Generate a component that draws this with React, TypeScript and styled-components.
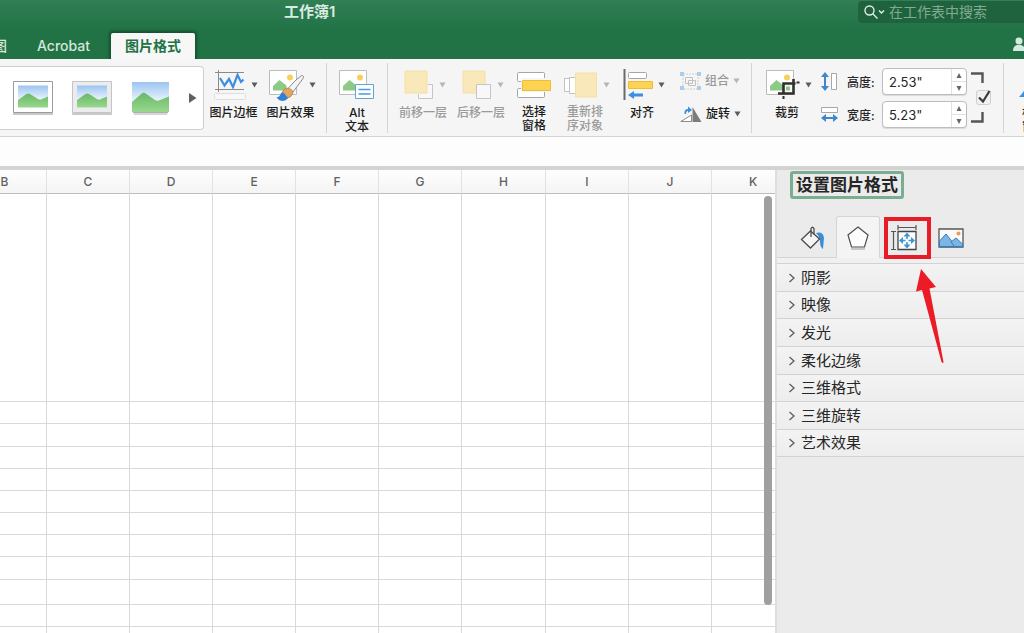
import React, { useEffect, useState } from "react";
import styled, { createGlobalStyle, css } from "styled-components";

const GlobalStyle = createGlobalStyle`
  * { box-sizing: border-box; }
  body {
    margin: 0;
    overflow: hidden;
    font-family: Inter, "Noto Sans CJK SC", sans-serif;
    color: #262626;
    background: #fff;
  }
  button, input { font-family: inherit; color: inherit; }
  button { border: 0; padding: 0; background: none; }
  svg { display: block; flex: none; }
`;

/* ---------- window ---------- */

const Window = styled.div`
  display: flex;
  flex-direction: column;
  height: 100vh;
  overflow: hidden;
`;

const Header = styled.header`
  background: linear-gradient(#317f55, #217346 50%, #217346);
`;

const TitleBar = styled.div`
  display: flex;
  align-items: center;
  height: 24px;
  padding-left: 284px;
`;

const DocTitle = styled.h1`
  margin: 0;
  font-size: 15px;
  line-height: 24px;
  font-weight: 600;
  color: #dcebe2;
`;

const Search = styled.label`
  display: flex;
  align-items: center;
  gap: 2px;
  width: 166px;
  height: 22px;
  margin-left: auto;
  padding-left: 6px;
  border-radius: 4px 0 0 4px;
  background: #1f633e;
  overflow: hidden;
`;

const SearchInput = styled.input`
  width: 130px;
  padding: 0;
  margin-left: 2px;
  border: 0;
  outline: 0;
  background: none;
  font-size: 14px;
  line-height: 20px;
  color: #fff;
  &::placeholder { color: #82ab93; opacity: 1; }
`;

const TabBar = styled.nav`
  display: flex;
  align-items: flex-end;
  height: 35px;
  overflow: hidden;
`;

const Tab = styled.button<{ $active?: boolean; $first?: boolean }>`
  height: 26px;
  padding: 0 12px;
  margin-right: 9px;
  font-size: 14px;
  line-height: 24px;
  font-weight: 500;
  color: #d5e6dc;
  ${(p) => p.$first && css`margin-left: -33px; margin-right: 6px;`}
  ${(p) => p.$active && css`
    font-weight: 700;
    color: #217346;
    background: #f7f7f7;
    border-radius: 2px 2px 0 0;
    box-shadow: 0 0 3px 2px #174f30;
    padding: 0 14px;
  `}
`;

const Share = styled.button`
  height: 28px;
  margin-left: auto;
  margin-right: -13px;
`;

/* ---------- ribbon ---------- */

const Ribbon = styled.div`
  display: flex;
  align-items: flex-start;
  height: 78px;
  background: #f5f5f5;
  border-bottom: 1px solid #d2d2d2;
  overflow: hidden;
  white-space: nowrap;
`;

const Gallery = styled.div`
  display: flex;
  flex: none;
  align-items: center;
  gap: 17px;
  width: 204px;
  height: 64px;
  margin-top: 7px;
  padding-left: 12px;
  border: 1px solid #cfcfcf;
  border-left: 0;
  border-radius: 0 4px 4px 0;
  background: #fff;
`;

const Group = styled.div<{ $gap?: number; $start?: number; $end?: number }>`
  display: flex;
  flex: none;
  gap: ${(p) => p.$gap ?? 8}px;
  height: 70px;
  margin-top: 4px;
  padding: 0 ${(p) => p.$end ?? 12}px 0 ${(p) => p.$start ?? 12}px;
  border-right: 1px solid #d4d4d4;
`;

const ToolButton = styled.button<{ $width: number; $disabled?: boolean }>`
  display: flex;
  flex: none;
  flex-direction: column;
  align-items: center;
  gap: 4px;
  width: ${(p) => p.$width}px;
  padding-top: 5px;
  font-size: 12px;
  line-height: 14px;
  font-weight: 500;
  color: ${(p) => (p.$disabled ? "#9a9a9a" : "#1c1c1c")};
`;

const IconRow = styled.span<{ $menu?: boolean }>`
  display: flex;
  align-items: center;
  gap: 5px;
  height: 34px;
  margin-left: ${(p) => (p.$menu ? 4 : 0)}px;
`;

const Stack = styled.div`
  display: flex;
  flex-direction: column;
  gap: 13px;
  padding: 8px 0 0 4px;
`;

const RowButton = styled.button<{ $disabled?: boolean }>`
  display: flex;
  align-items: center;
  gap: 4px;
  height: 20px;
  font-size: 12px;
  line-height: 20px;
  font-weight: 500;
  color: ${(p) => (p.$disabled ? "#9a9a9a" : "#1c1c1c")};
`;

const SizeFields = styled.div`
  display: flex;
  flex-direction: column;
  gap: 6px;
  margin-left: 7px;
  padding-top: 5px;
`;

const SizeRow = styled.label`
  display: flex;
  align-items: center;
  height: 27px;
  font-size: 12px;
  font-weight: 500;
`;

const SizeName = styled.span`
  width: 35px;
  margin-left: 9px;
`;

const Stepper = styled.span`
  display: flex;
  width: 85px;
  height: 27px;
  border: 1px solid #bdbdbd;
  border-radius: 4px;
  background: #fff;
  box-shadow: 0 1px 1px #d9d9d9;
`;

const StepInput = styled.input`
  flex: 1;
  min-width: 0;
  padding: 0 0 0 6px;
  border: 0;
  outline: 0;
  background: none;
  font-size: 13px;
`;

const StepButtons = styled.span`
  display: flex;
  flex-direction: column;
  width: 15px;
  border-left: 1px solid #e2e2e2;
`;

const StepButton = styled.button`
  display: flex;
  flex: 1;
  align-items: center;
  justify-content: center;
  & + & { border-top: 1px solid #e2e2e2; }
`;

const Lock = styled.label`
  display: flex;
  flex-direction: column;
  gap: 7px;
  width: 20px;
  padding-top: 9px;
`;

const LockBox = styled.span`
  position: relative;
  height: 15px;
  margin-left: 5px;
`;

const CheckBox = styled.input`
  display: block;
  appearance: none;
  width: 15px;
  height: 15px;
  margin: 0;
  border: 1px solid #cfcfcf;
  border-radius: 3px;
  background: #f1f1f1;
`;

const CheckMark = styled.svg`
  position: absolute;
  left: 0;
  top: 0;
  pointer-events: none;
`;

/* ---------- work area ---------- */

const FormulaBar = styled.div`
  flex: none;
  height: 33px;
  background: #fdfdfd;
  border-bottom: 4px solid #d3d3d3;
`;

const Work = styled.main`
  display: flex;
  flex: 1;
  min-height: 0;
`;

const Sheet = styled.section`
  position: relative;
  flex: 1;
  min-width: 0;
  overflow: hidden;
  background: #fff;
`;

const Grid = styled.table`
  table-layout: fixed;
  border-collapse: separate;
  border-spacing: 0;
  width: 0;
  margin-left: -37px;
`;

const ColumnHead = styled.th`
  height: 24px;
  padding: 0;
  border-bottom: 1px solid #bdbdbd;
  border-right: 1px solid #e2e2e2;
  background: linear-gradient(#fefefe, #f4f4f4);
  font-size: 12px;
  line-height: 23px;
  font-weight: 500;
  color: #606060;
`;

const Cell = styled.td<{ $height: number }>`
  height: ${(p) => p.$height}px;
  padding: 0;
  border-right: 1px solid #d9d9d9;
  border-bottom: 1px solid #d9d9d9;
`;

const ScrollThumb = styled.div`
  position: absolute;
  right: 3px;
  top: 26px;
  bottom: 28px;
  width: 8px;
  border-radius: 4px;
  background: #9f9f9f;
`;

/* ---------- format pane ---------- */

const Pane = styled.aside`
  position: relative;
  flex: none;
  width: 249px;
  border-left: 2px solid #dedede;
  background: #ebebeb;
`;

const PaneTitle = styled.h2`
  width: fit-content;
  margin: 1px 0 0 13px;
  padding: 0 3px;
  border: 3px solid #7bae91;
  border-radius: 3px;
  font-size: 17px;
  line-height: 22px;
  font-weight: 700;
  color: #262626;
`;

const PaneTabs = styled.div`
  display: flex;
  height: 42px;
  margin-top: 17px;
  padding-left: 12px;
  background: linear-gradient(#d4d4d4, #d4d4d4) bottom / 100% 1px no-repeat;
`;

const PaneTab = styled.button<{ $active?: boolean }>`
  position: relative;
  display: flex;
  align-items: center;
  justify-content: center;
  width: ${(p) => (p.$active ? 44 : 47)}px;
  border: 1px solid ${(p) => (p.$active ? "#d4d4d4" : "transparent")};
  border-bottom: 0;
  border-radius: 3px 3px 0 0;
  background: ${(p) => (p.$active ? "#f4f4f4" : "none")};
`;

const Highlight = styled.span`
  position: absolute;
  left: 3px;
  top: 0;
  width: 47px;
  height: 42px;
  border: 4px solid #e81c27;
`;

const Arrow = styled.svg`
  position: absolute;
  left: 138px;
  top: 99px;
`;

const Sections = styled.div`
  padding-top: 5px;
  background: #f0f0f0;
`;

const SectionButton = styled.button`
  display: flex;
  align-items: center;
  gap: 5px;
  width: 100%;
  height: 28px;
  padding-left: 11px;
  border-top: 1px solid #d2d2d2;
  background: linear-gradient(#f3f3f3, #ededed);
  font-size: 15px;
  line-height: 26px;
  &:nth-child(3n + 2) { height: 27px; }
  &:last-child { border-bottom: 1px solid #d2d2d2; }
`;

/* ---------- drawings ---------- */

const Caret = ({ faint }: { faint?: boolean }) => (
  <svg width="7" height="6" viewBox="0 0 7 6"><path d="M.5 .5h6L3.5 5.5z" fill={faint ? "#b5b5b5" : "#5c5c5c"} /></svg>
);

const StepArrow = ({ down }: { down?: boolean }) => (
  <svg width="6" height="5" viewBox="0 0 6 5"><path d={down ? "M.5 0h5L3 5z" : "M.5 5h5L3 0z"} fill="#666" /></svg>
);

const Thumb = ({ frame }: { frame: "white" | "grey" | "none" }) => {
  const full = frame === "none";
  return (
    <svg width="42" height="38" viewBox="0 0 42 38">
      <defs>
        <linearGradient id={`sky-${frame}`} x2="0" y2="1"><stop stopColor="#9cc4f1" /><stop offset=".6" stopColor="#e6f1fb" /><stop offset="1" stopColor="#f2f8fd" /></linearGradient>
        <linearGradient id={`hill-${frame}`} x2="0" y2="1"><stop stopColor="#6ab866" /><stop offset="1" stopColor="#98d88e" /></linearGradient>
      </defs>
      {full ? (
        <>
          <path d="M3 33h35l-1 3H4z" fill="#c4c4c4" opacity=".7" />
          <path d="M3 33h35v1H3z" fill="#8c9a8c" opacity=".6" />
          <path d="M2 3h37v30H2z" fill={`url(#sky-${frame})`} />
          <path d="M2 23L11.500 14.700Q13.500 13 16 14.700L25 21Q27.500 22.500 30 21L39 17.500V33H2z" fill={`url(#hill-${frame})`} />
        </>
      ) : (
        <>
          <path d="M1 34h40v2H1z" fill="#c9c9c9" />
          <path d="M1.500 2.500h39v31h-39z" fill={frame === "white" ? "#fff" : "#ececee"} stroke={frame === "white" ? "#9b9b9b" : "#c4c4c6"} />
          <path d="M6 6.500h30v22H6z" fill={`url(#sky-${frame})`} />
          <path d="M6 21L14.500 15Q16 14 18 15L26 20Q28 21 30 20L36 17.500V28.500H6z" fill={`url(#hill-${frame})`} />
        </>
      )}
    </svg>
  );
};

const BorderIcon = () => (
  <svg width="32" height="32" viewBox="0 0 32 32" fill="none">
    <path d="M1 3.500h29M1 20.500h29M4.500 1v22" stroke="#8a8a8a" />
    <path d="M6 9l4.500 7.500 4.500-6.500 4 8 4.500-12 3.500 7 2.500-2.500" stroke="#3c8ee0" strokeWidth="2.200" />
    <rect x=".5" y="24.500" width="31" height="6" rx="1" fill="#f8f8f8" stroke="#dedede" />
  </svg>
);

const Photo = () => (
  <g>
    <path d="M.5 2.500h27v24H.5z" fill="#fff" stroke="#bcbcbc" />
    <circle cx="21" cy="9.500" r="3" fill="#f8cf58" />
    <path d="M4 22.500v-4.500l6.500-6 7 5.500v5z" fill="#8cca86" />
  </g>
);

const EffectsIcon = () => (
  <svg width="35" height="34" viewBox="0 0 35 34">
    <Photo />
    <path d="M32.500 7.500Q35.500 7.500 34 10.500L24 24Q21 24 19 20.500Q26 12 32.500 7.500z" fill="#f4f4f4" stroke="#8a8a8a" />
    <path d="M18 20q6 1 6 5-2 5-6 5l-5-5q1-4 5-5z" fill="#e3a65c" stroke="#a76d2a" strokeWidth=".6" />
    <path d="M7.500 29.500q3.500-.5 4.500-4.500 1-1 3 0l4 5q-2 3-6 3-4-1-5.500-3.500z" fill="#3181d8" />
  </svg>
);

const AltIcon = () => (
  <svg width="36" height="34" viewBox="0 0 36 34">
    <Photo />
    <path d="M16.500 16.500h18v14h-18z" fill="#fff" stroke="#5aa6d8" />
    <path d="M19.500 21.500h12M19.500 26h12" stroke="#4b9bdd" strokeWidth="1.400" />
  </svg>
);

const ForwardIcon = () => (
  <svg width="30" height="32" viewBox="0 0 30 32">
    <path d="M14.500 15.500h14v14h-14z" fill="#f8f8f8" stroke="#c5c5c5" />
    <path d="M0 1h24v24H0z" fill="#f5f5f5" />
    <path d="M1 2h22v22H1z" fill="#f9e8ba" stroke="#f6dfa4" />
  </svg>
);

const BackwardIcon = () => (
  <svg width="30" height="32" viewBox="0 0 30 32">
    <path d="M1 2h22v22H1z" fill="#f9e8ba" stroke="#f6dfa4" />
    <path d="M14.500 15.500h14v14h-14z" fill="#f8f8f8" stroke="#c5c5c5" />
  </svg>
);

const SelectionIcon = () => (
  <svg width="34" height="32" viewBox="0 0 34 32">
    <rect x=".5" y="3.500" width="27" height="9" rx="1" fill="#fff" stroke="#a6a6a6" />
    <rect x=".5" y="19.500" width="27" height="9" rx="1" fill="#fff" stroke="#a6a6a6" />
    <path d="M4 9h30v14H4z" fill="#f5f5f5" />
    <path d="M5.500 11.500h28v10h-28z" fill="#ffd352" stroke="#eebc3b" />
  </svg>
);

const ReorderIcon = () => (
  <svg width="34" height="32" viewBox="0 0 34 32">
    <path d="M.5 9.500h6v13h-6z" fill="#fff" stroke="#c2c2c2" />
    <path d="M5.500 8.500h8v16h-8z" fill="#fff" stroke="#c2c2c2" />
    <path d="M11.500 4h21v24h-21z" fill="#f9e8ba" stroke="#f6dfa4" />
  </svg>
);

const AlignIcon = () => (
  <svg width="30" height="32" viewBox="0 0 30 32">
    <path d="M1.500 0v31" stroke="#6a6a6a" strokeWidth="2" />
    <rect x="5.500" y="3.500" width="18" height="6" rx="1" fill="#fff" stroke="#a6a6a6" />
    <path d="M5.500 12.500h24v7h-24z" fill="#ffd352" stroke="#eebc3b" />
    <path d="M5 26l6-4v2.500h9v3h-9V30z" fill="#3c8ee0" />
  </svg>
);

const GroupIcon = () => (
  <svg width="21" height="19" viewBox="0 0 21 19" fill="none">
    <path d="M3 2h15v15H3z" stroke="#cfcfcf" strokeDasharray="2 1" />
    <path d="M5.500 5.500h7v6h-7zM8.500 8.500h7v5h-7z" stroke="#c0c0c0" />
    <path d="M0 0h4v4H0zM17 0h4v4h-4zM0 14h4v4H0zM17 14h4v4h-4z" fill="#a9cdee" />
  </svg>
);

const RotateIcon = () => (
  <svg width="22" height="18" viewBox="0 0 22 18">
    <path d="M.8 16.500L11.500 10v6.500z" fill="#fff" stroke="#8b8b8b" />
    <path d="M12.500 2L21.500 17h-9z" fill="#7c7c7c" />
    <path d="M4.500 9Q4 4 8 4V1.500L12 5 8 8V6Q6 6 6 9z" fill="#3c8ee0" />
  </svg>
);

const CropIcon = () => (
  <svg width="34" height="34" viewBox="0 0 34 34" fill="none">
    <Photo />
    <path d="M17 15h10v10H17z" fill="#f7f7f7" />
    <path d="M20 18.500h4v4h-4z" fill="#8cca86" />
    <path d="M17.500 26V15.500h12M27.500 11v14.500H12" stroke="#303030" strokeWidth="2.600" />
    <path d="M17.500 28v3M30.500 14.500h3" stroke="#303030" strokeWidth="2" />
  </svg>
);

const HeightIcon = () => (
  <svg width="17" height="19" viewBox="0 0 17 19">
    <path d="M4 0l4 5H5v9h3l-4 5-4-5h3V5H0z" fill="#3d88c9" />
    <path d="M10.500 1.500h5v16h-5z" fill="#fff" stroke="#a8a8a8" />
  </svg>
);

const WidthIcon = () => (
  <svg width="17" height="17" viewBox="0 0 17 17">
    <path d="M.5 1.500h16v5H.5z" fill="#fff" stroke="#a8a8a8" />
    <path d="M0 12l5-4v3h7V8l5 4-5 4v-3H5v3z" fill="#3d88c9" />
  </svg>
);

const PaneIcon = () => (
  <svg width="30" height="34" viewBox="0 0 30 34">
    <path d="M0 29Q5 25 10 12l14 2v15z" fill="#3b8de0" />
  </svg>
);

const PersonIcon = () => (
  <svg width="24" height="16" viewBox="0 0 24 16" fill="#d7e8de">
    <circle cx="6" cy="4" r="3.500" /><path d="M0 14q0-5 4-6h4q4 1 4 6z" /><path d="M14 7h8v2h-8z" />
  </svg>
);

const FillIcon = () => (
  <svg width="26" height="26" viewBox="0 0 26 26" fill="none">
    <path d="M16 8q7-2 8 5l-1 11q-3-2-3-7 0-5-4-9z" fill="#3c8fd4" />
    <path d="M1.500 14.500l9-8.500 9 8-9 9z" fill="#f5f5f5" stroke="#4d4d4d" strokeWidth="1.300" />
    <path d="M11 12V3.500q1.500-2.500 3 0v6" stroke="#4d4d4d" strokeWidth="1.300" />
  </svg>
);

const PentagonIcon = () => (
  <svg width="24" height="26" viewBox="0 0 24 26">
    <path d="M12 2l10 8-3.500 12h-13L2 10z" fill="#fcfcfc" stroke="#4d4d4d" strokeWidth="1.200" />
    <path d="M5 24h14" stroke="#a8a8a8" strokeWidth="1.200" />
  </svg>
);

const SizeIcon = () => (
  <svg width="26" height="27" viewBox="0 0 26 27" fill="none">
    <path d="M7 3.500h18M7 1v5M25 1v5M2.500 7.500v18M0 7.500h5M0 25.500h5" stroke="#555" strokeWidth="1.200" />
    <path d="M7 7.500h18v18H7z" fill="#fdfdfd" stroke="#444" strokeWidth="1.300" />
    <path d="M16 8.500l3.500 4h-7zM16 24.500l3.500-4h-7zM8 16.500l4-3.500v7zM24 16.500l-4-3.500v7z" fill="#3c96d4" />
    <path d="M16 12v3M16 18v3M11.500 16.500h3M17.500 16.500h3" stroke="#3c96d4" strokeWidth="1.600" />
  </svg>
);

const PictureIcon = () => (
  <svg width="26" height="20" viewBox="0 0 26 20">
    <path d="M1 1h24v18H1z" fill="#fafafa" stroke="#555" strokeWidth="1.300" />
    <path d="M1.500 13L8 6l10 12.500H1.500z" fill="#7bb5e6" stroke="#2f7fc0" />
    <path d="M13 14l5-4 6.500 6v2.500h-8z" fill="#7bb5e6" stroke="#2f7fc0" />
    <circle cx="20.500" cy="5.500" r="2" fill="#f09a4c" />
  </svg>
);

/* ---------- parts ---------- */

type ToolProps = { icon: React.ReactNode; lines: string[]; width: number; menu?: boolean; disabled?: boolean };

const Tool = ({ icon, lines, width, menu, disabled }: ToolProps) => (
  <ToolButton $width={width} $disabled={disabled} disabled={disabled}>
    <IconRow $menu={menu}>
      {icon}
      {menu && <Caret faint={disabled} />}
    </IconRow>
    <span>
      {lines.map((line) => <div key={line}>{line}</div>)}
    </span>
  </ToolButton>
);

const SizeField = ({ icon, name, value }: { icon: React.ReactNode; name: string; value: string }) => (
  <SizeRow>
    {icon}
    <SizeName>{name}:</SizeName>
    <Stepper>
      <StepInput defaultValue={value} />
      <StepButtons>
        <StepButton aria-label="+"><StepArrow /></StepButton>
        <StepButton aria-label="-"><StepArrow down /></StepButton>
      </StepButtons>
    </Stepper>
  </SizeRow>
);

const columnNames = "BCDEFGHIJKLMNOPQRSTUVWXYZ".split("");
const columnWidth = (name: string) => (name === "B" || name === "H" ? 84 : 83);
const rowHeights = [208, 22, 23, 22, 22, 22, 22, 22, 23, 25, 22, 22, 22, 22, 22, 22, 22, 22];
const sections = ["阴影", "映像", "发光", "柔化边缘", "三维格式", "三维旋转", "艺术效果"];

/* Only as many columns as fit beside the 249px pane; the first one is scrolled 37px out. */
const visibleColumns = () => columnNames.slice(0, Math.ceil((window.innerWidth - 249 + 37) / 83));

function useColumns() {
  const [columns, setColumns] = useState(visibleColumns);
  useEffect(() => {
    const update = () => setColumns(visibleColumns());
    window.addEventListener("resize", update);
    return () => window.removeEventListener("resize", update);
  }, []);
  return columns;
}

export default function App() {
  const columns = useColumns();
  return (
    <Window>
      <GlobalStyle />
      <Header>
        <TitleBar>
          <DocTitle>工作簿1</DocTitle>
          <Search>
            <svg width="21" height="15" viewBox="0 0 21 15" fill="none" stroke="#e2eee7" strokeWidth="1.400">
              <circle cx="5.500" cy="5.500" r="4.500" /><path d="M9 9l4.500 4.500M15 5.500l2.500 2.500L20 5.500" />
            </svg>
            <SearchInput aria-label="在工作表中搜索" placeholder="在工作表中搜索" />
          </Search>
        </TitleBar>
        <TabBar>
          <Tab $first>视图</Tab>
          <Tab>Acrobat</Tab>
          <Tab $active>图片格式</Tab>
          <Share aria-label="共享"><PersonIcon /></Share>
        </TabBar>
      </Header>

      <Ribbon>
        <Gallery>
          <Thumb frame="white" />
          <Thumb frame="grey" />
          <Thumb frame="none" />
          <svg width="8" height="10" viewBox="0 0 8 10"><path d="M0 0l7.500 5L0 10z" fill="#5f5f5f" /></svg>
        </Gallery>
        <Group $start={5} $end={11}>
          <Tool width={49} menu icon={<BorderIcon />} lines={["图片边框"]} />
          <Tool width={49} menu icon={<EffectsIcon />} lines={["图片效果"]} />
        </Group>
        <Group>
          <Tool width={36} icon={<AltIcon />} lines={["Alt", "文本"]} />
        </Group>
        <Group $start={10} $end={10}>
          <Tool width={50} menu disabled icon={<ForwardIcon />} lines={["前移一层"]} />
          <Tool width={50} menu disabled icon={<BackwardIcon />} lines={["后移一层"]} />
          <Tool width={40} icon={<SelectionIcon />} lines={["选择", "窗格"]} />
          <Tool width={46} menu disabled icon={<ReorderIcon />} lines={["重新排", "序对象"]} />
          <Tool width={52} menu icon={<AlignIcon />} lines={["对齐"]} />
          <Stack>
            <RowButton $disabled disabled><GroupIcon />组合<Caret faint /></RowButton>
            <RowButton><RotateIcon />旋转<Caret /></RowButton>
          </Stack>
        </Group>
        <Group $gap={4}>
          <Tool width={46} menu icon={<CropIcon />} lines={["裁剪"]} />
          <SizeFields>
            <SizeField icon={<HeightIcon />} name="高度" value={'2.53"'} />
            <SizeField icon={<WidthIcon />} name="宽度" value={'5.23"'} />
          </SizeFields>
          <Lock aria-label="锁定纵横比">
            <svg width="13" height="11" viewBox="0 0 13 11" fill="none"><path d="M0 1.500h11.500V11" stroke="#555" strokeWidth="2.400" /></svg>
            <LockBox>
              <CheckBox type="checkbox" defaultChecked />
              <CheckMark width="16" height="15" viewBox="0 0 16 15" fill="none"><path d="M3 7.500l4 4L13.500 1" stroke="#3a3a3a" strokeWidth="2.200" /></CheckMark>
            </LockBox>
            <svg width="13" height="11" viewBox="0 0 13 11" fill="none"><path d="M0 9.500h11.500V0" stroke="#555" strokeWidth="2.400" /></svg>
          </Lock>
        </Group>
        <Group>
          <Tool width={36} icon={<PaneIcon />} lines={["格式", "窗格"]} />
        </Group>
      </Ribbon>

      <FormulaBar />

      <Work>
        <Sheet>
          <Grid>
            <colgroup>{columns.map((name) => <col key={name} width={columnWidth(name)} />)}</colgroup>
            <thead>
              <tr>{columns.map((name) => <ColumnHead key={name}>{name}</ColumnHead>)}</tr>
            </thead>
            <tbody>
              {rowHeights.map((height, row) => (
                <tr key={row}>{columns.map((name) => <Cell key={name} $height={height} />)}</tr>
              ))}
            </tbody>
          </Grid>
          <ScrollThumb />
        </Sheet>

        <Pane>
          <PaneTitle>设置图片格式</PaneTitle>
          <PaneTabs>
            <PaneTab aria-label="填充与线条"><FillIcon /></PaneTab>
            <PaneTab $active aria-label="效果"><PentagonIcon /></PaneTab>
            <PaneTab aria-label="大小与属性"><SizeIcon /><Highlight /></PaneTab>
            <PaneTab aria-label="图片"><PictureIcon /></PaneTab>
          </PaneTabs>
          <Sections>
            {sections.map((name) => (
              <SectionButton key={name}>
                <svg width="8" height="10" viewBox="0 0 8 10" fill="none"><path d="M1.500 1L6 5 1.500 9" stroke="#5c5c5c" strokeWidth="1.300" /></svg>
                {name}
              </SectionButton>
            ))}
          </Sections>
          <Arrow width="32" height="96" viewBox="0 0 32 96">
            <path d="M6 0L21 18l-6.500 1.500L28.500 93q0 2-2 0L7 21 1 22.500z" fill="#ec1c27" />
          </Arrow>
        </Pane>
      </Work>
    </Window>
  );
}
